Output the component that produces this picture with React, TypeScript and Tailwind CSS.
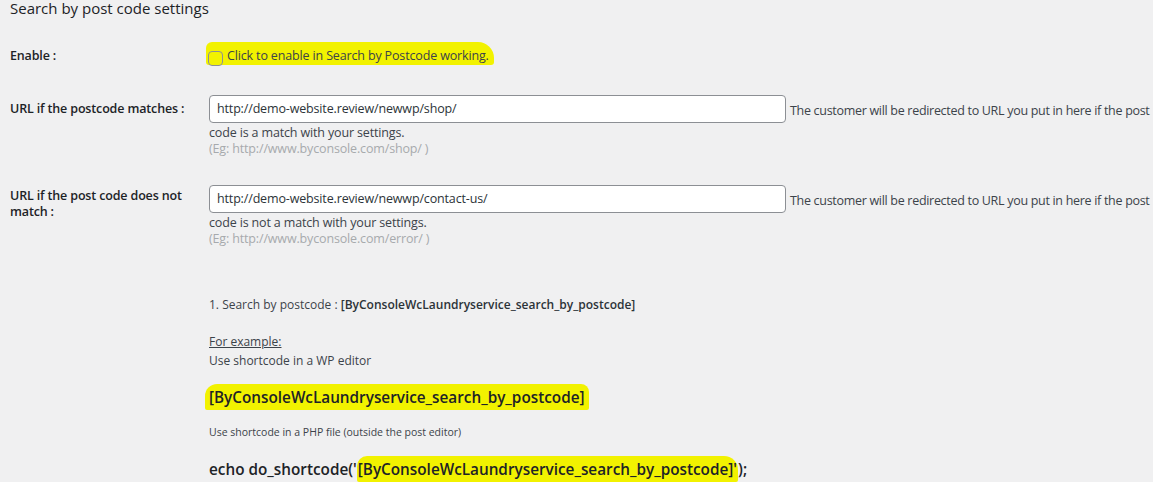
import React from 'react'

const hl = 'bg-[#f2f200]'

function Field({ value, desc, rest, eg }: { value: string; desc: string; rest: string; eg: string }) {
  return (
    <div className="min-w-0 flex-1">
      <div className="flex items-center whitespace-nowrap">
        <div className="flex h-[28px] w-[577px] shrink-0 items-center rounded-[4px] border border-[#8c8f94] bg-white px-[7px] text-[#2c3338]">
          {value}
        </div>
        <span className="ml-[4px] pt-[4px] tracking-[-0.3px] text-[#3c434a]">{desc}</span>
      </div>
      <p className="mt-[1px] leading-[17px] text-[#3c434a]">{rest}</p>
      <p className="leading-[16px] text-[#a7aaad]">{eg}</p>
    </div>
  )
}

export default function App() {
  return (
    <div
      className="h-[482px] w-[1153px] overflow-hidden bg-[#f0f0f1] text-[12.5px] tracking-[-0.15px] text-[#3c434a]"
      style={{ fontFamily: '"Open Sans", "Noto Sans", sans-serif' }}
    >
      <h2 className="pl-[10px] text-[15px] leading-[17px] font-normal tracking-normal text-[#1d2327]">
        Search by post code settings
      </h2>

      {/* enable */}
      <div className="mt-[25px] flex items-end">
        <div className="w-[209px] shrink-0 pb-[1px] pl-[10px] leading-[16px] font-semibold text-[#1d2327]">Enable :</div>
        <label
          className={`-ml-[3px] flex items-end gap-[4px] rounded-[6px_16px_3px_3px] ${hl} pb-[1px] pl-[2px] pr-[5px] pt-[6px] text-[#3c434a]`}
        >
          <span className="mb-[-2px] h-[15px] w-[15px] rounded-[4px] border border-[#8c8f94]" />
          <span className="leading-[16px]">Click to enable in Search by Postcode working.</span>
        </label>
      </div>

      {/* url match */}
      <div className="mt-[30px] flex items-start">
        <div className="w-[209px] shrink-0 pl-[10px] pt-[5px] leading-[17px] font-semibold text-[#1d2327]">
          URL if the postcode matches :
        </div>
        <Field
          value="http://demo-website.review/newwp/shop/"
          desc="The customer will be redirected to URL you put in here if the post"
          rest="code is a match with your settings."
          eg="(Eg: http://www.byconsole.com/shop/ )"
        />
      </div>

      {/* url no match */}
      <div className="mt-[28px] flex items-start">
        <div className="w-[209px] shrink-0 pl-[10px] pr-[22px] pt-[3px] leading-[16px] font-semibold text-[#1d2327]">
          URL if the post code does not match :
        </div>
        <Field
          value="http://demo-website.review/newwp/contact-us/"
          desc="The customer will be redirected to URL you put in here if the post"
          rest="code is not a match with your settings."
          eg="(Eg: http://www.byconsole.com/error/ )"
        />
      </div>

      {/* shortcode help */}
      <div className="pl-[209px]">
        <p className="mt-[50px] text-[12px] leading-[16px] tracking-normal text-[#3c434a]">
          1. Search by postcode :{' '}
          <span className="font-semibold text-[#2c3338]">[ByConsoleWcLaundryservice_search_by_postcode]</span>
        </p>
        <p className="mt-[21px] text-[12px] leading-[16px] tracking-normal underline">For example:</p>
        <p className="mt-[3px] text-[12px] leading-[16px] tracking-normal">Use shortcode in a WP editor</p>
        <p className="mt-[15px] text-[15.3px] leading-[20px] font-semibold tracking-normal text-[#1d2327]">
          <span className={`${hl} -ml-[4px] inline-block rounded-[12px_8px_2px_2px] px-[4px] py-[3px]`}>
            [ByConsoleWcLaundryservice_search_by_postcode]
          </span>
        </p>
        <p className="mt-[15px] text-[10.5px] leading-[15px] tracking-normal text-[#3c434a]">
          Use shortcode in a PHP file (outside the post editor)
        </p>
        <p className="mt-[16px] whitespace-nowrap text-[15.3px] leading-[20px] font-semibold tracking-normal text-[#1d2327]">
          echo do_shortcode(&apos;
          <span className={`${hl} inline-block rounded-[10px_14px_2px_2px] px-[1px] py-[3px]`}>
            [ByConsoleWcLaundryservice_search_by_postcode]&apos;
          </span>
          );
        </p>
      </div>
    </div>
  )
}
